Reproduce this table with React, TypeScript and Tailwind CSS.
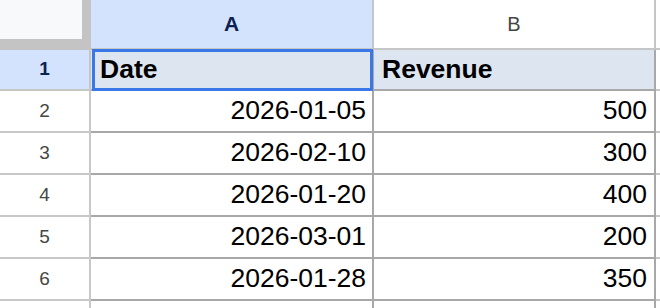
import React from 'react';

const rows = [
  { n: 2, date: '2026-01-05', revenue: 500 },
  { n: 3, date: '2026-02-10', revenue: 300 },
  { n: 4, date: '2026-01-20', revenue: 400 },
  { n: 5, date: '2026-03-01', revenue: 200 },
  { n: 6, date: '2026-01-28', revenue: 350 },
];

const App: React.FC = () => {
  return (
    <div
      className="w-[660px] h-[308px] overflow-hidden bg-white"
      style={{ fontFamily: '"Liberation Sans", Arial, sans-serif' }}
    >
      {/* Column headers */}
      <div className="flex h-[50px]">
        <div className="w-[91px] h-[50px] shrink-0 bg-[#c4c4c4]">
          <div className="w-[82px] h-[39px] bg-[#f8f9fa]" />
        </div>
        <div className="w-[283px] shrink-0 flex items-center justify-center bg-[#d3e3fd] border-r-2 border-b-2 border-[#c4c7c5] text-[21px] font-bold text-[#0b2152]">
          A
        </div>
        <div className="w-[282px] shrink-0 flex items-center justify-center bg-white border-r-2 border-b-2 border-[#c4c7c5] text-[20px] text-[#444746]">
          B
        </div>
        <div className="flex-1 border-b-2 border-[#c4c7c5]" />
      </div>

      {/* Row 1 */}
      <div className="flex h-[41px]">
        <div className="w-[91px] shrink-0 flex items-center justify-center bg-[#d3e3fd] border-r-2 border-b-2 border-[#c4c7c5] text-[19px] font-bold text-[#0b2152]">
          1
        </div>
        <div className="relative w-[283px] shrink-0 flex items-center px-[9px] bg-[#dde6f0] border-r-2 border-b-2 border-[#a8a8a8] text-[26.5px] font-bold text-black">
          Date
          <div className="absolute -top-px left-px -right-px -bottom-[2px] border-[3px] border-[#3b78e7]" />
        </div>
        <div className="w-[282px] shrink-0 flex items-center px-[8px] bg-[#dde6f0] border-r-2 border-b-2 border-[#a8a8a8] text-[26.5px] font-bold text-black">
          Revenue
        </div>
        <div className="flex-1 border-b-2 border-[#c4c7c5]" />
      </div>

      {/* Data rows */}
      {rows.map((r) => (
        <div key={r.n} className="flex h-[42px]">
          <div className="w-[91px] shrink-0 flex items-center justify-center border-r-2 border-b-2 border-[#c8c8c8] text-[19px] text-[#444746]">
            {r.n}
          </div>
          <div className="w-[283px] shrink-0 flex items-center justify-end px-[6px] border-r-2 border-b-2 border-[#a8a8a8] text-[26.5px] text-black">
            {r.date}
          </div>
          <div className="w-[282px] shrink-0 flex items-center justify-end px-[7px] border-r-2 border-b-2 border-[#a8a8a8] text-[26.5px] text-black">
            {r.revenue}
          </div>
          <div className="flex-1 border-b-2 border-[#c4c7c5]" />
        </div>
      ))}

      {/* Row 7 stub */}
      <div className="flex h-[20px]">
        <div className="w-[91px] shrink-0 border-r-2 border-[#c8c8c8]" />
        <div className="w-[283px] shrink-0 border-r-2 border-[#a8a8a8]" />
        <div className="w-[282px] shrink-0 border-r-2 border-[#a8a8a8]" />
      </div>
    </div>
  );
};

export default App;
